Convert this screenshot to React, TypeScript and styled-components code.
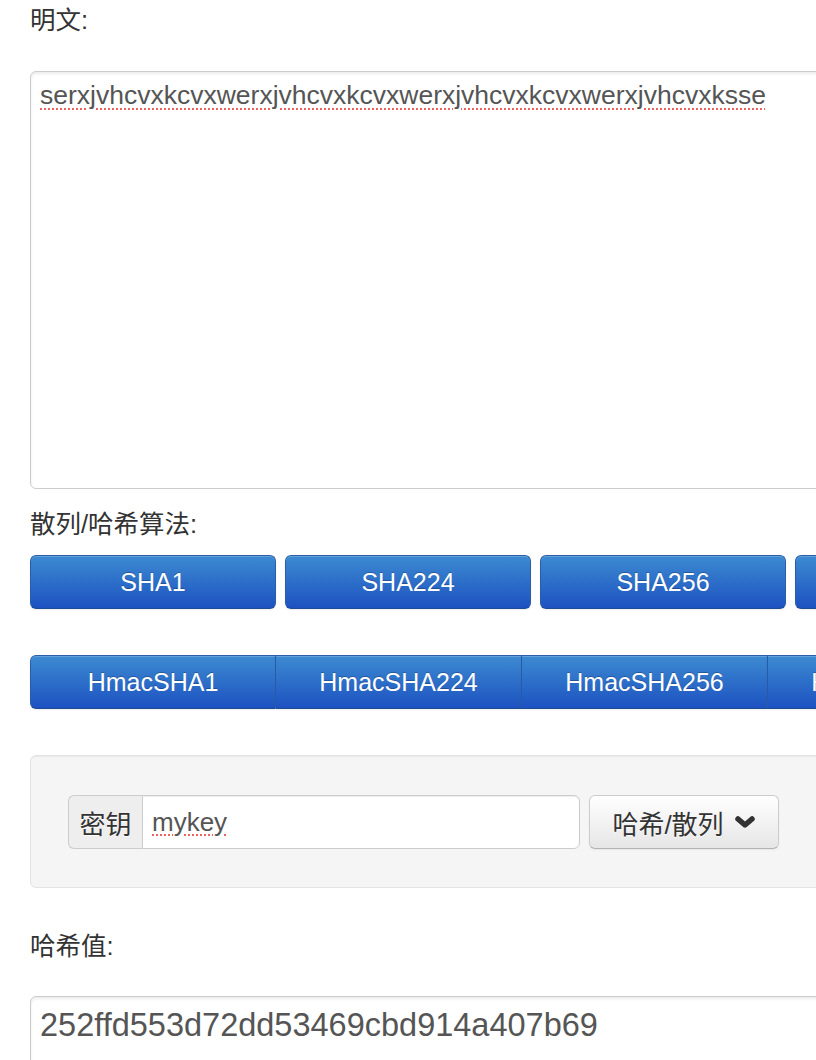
import React from "react";
import styled, { createGlobalStyle } from "styled-components";

const GlobalStyle = createGlobalStyle`
  html, body {
    margin: 0;
    padding: 0;
    background: #ffffff;
    overflow: hidden;
  }
  body {
    font-family: "Liberation Sans", "Noto Sans CJK SC", sans-serif;
    color: #333333;
  }
`;

const Page = styled.div`
  width: 1400px;
  padding: 5px 0 0 30px;
  box-sizing: border-box;
`;

const Label = styled.div<{ $top?: number }>`
  font-size: 25.5px;
  line-height: 30px;
  color: #333333;
  margin-top: ${(p) => p.$top ?? 0}px;
`;

const TextBox = styled.div<{ $top: number; $height: number; $size: number; $line: number; $padTop: number }>`
  box-sizing: border-box;
  width: 1300px;
  height: ${(p) => p.$height}px;
  margin-top: ${(p) => p.$top}px;
  padding: ${(p) => p.$padTop}px 9px 0 9px;
  border: 1px solid #cccccc;
  border-radius: 6px;
  background: #ffffff;
  box-shadow: inset 0 2px 3px rgba(0, 0, 0, 0.08);
  font-size: ${(p) => p.$size}px;
  line-height: ${(p) => p.$line}px;
  color: #555555;
  white-space: nowrap;
`;

const Misspelled = styled.span`
  text-decoration-line: underline;
  text-decoration-style: dotted;
  text-decoration-color: #f0625f;
  text-decoration-thickness: 2px;
  text-underline-offset: 4px;
`;

const ButtonRow = styled.div<{ $top: number; $joined?: boolean }>`
  display: flex;
  gap: ${(p) => (p.$joined ? 0 : 9)}px;
  margin-top: ${(p) => p.$top}px;
`;

const BlueButton = styled.button<{ $joined?: boolean; $first?: boolean }>`
  flex: 0 0 246px;
  width: 246px;
  height: 54px;
  box-sizing: border-box;
  margin: 0;
  padding: 0;
  font-family: "Liberation Sans", "Noto Sans CJK SC", sans-serif;
  font-size: 25px;
  color: #ffffff;
  text-shadow: 0 -1px 0 rgba(0, 0, 0, 0.25);
  background: linear-gradient(to bottom, #3c8ad1, #1d52c1);
  border: 1px solid #2a5ea9;
  border-bottom-color: #1f4a94;
  border-left: ${(p) => (p.$joined && !p.$first ? "none" : "1px solid #2a5ea9")};
  border-radius: ${(p) => (p.$joined ? (p.$first ? "6px 0 0 6px" : "0") : "6px")};
  box-shadow: inset 0 1px 0 rgba(255, 255, 255, 0.2), 0 1px 2px rgba(0, 0, 0, 0.08);
  cursor: pointer;
`;

const Well = styled.div`
  box-sizing: border-box;
  width: 1300px;
  height: 133px;
  margin-top: 46px;
  padding: 39px 0 0 37px;
  background: #f5f5f5;
  border: 1px solid #e3e3e3;
  border-radius: 6px;
  box-shadow: inset 0 1px 1px rgba(0, 0, 0, 0.05);
  display: flex;
  align-items: flex-start;
  gap: 9px;
`;

const InputGroup = styled.div`
  display: flex;
  height: 54px;
`;

const Addon = styled.span`
  box-sizing: border-box;
  width: 74px;
  height: 54px;
  display: flex;
  align-items: center;
  justify-content: center;
  background: #eeeeee;
  border: 1px solid #cccccc;
  border-right: none;
  border-radius: 6px 0 0 6px;
  font-size: 26px;
  color: #333333;
  text-shadow: 0 1px 0 #ffffff;
`;

const KeyInput = styled.div`
  box-sizing: border-box;
  width: 438px;
  height: 54px;
  display: flex;
  align-items: center;
  padding: 0 9px;
  background: #ffffff;
  border: 1px solid #cccccc;
  border-radius: 0 6px 6px 0;
  box-shadow: inset 0 1px 1px rgba(0, 0, 0, 0.075);
  font-size: 26px;
  color: #555555;
`;

const DropButton = styled.button`
  box-sizing: border-box;
  width: 190px;
  height: 54px;
  margin: 0;
  padding: 0;
  display: flex;
  align-items: center;
  justify-content: center;
  gap: 10px;
  font-family: "Liberation Sans", "Noto Sans CJK SC", sans-serif;
  font-size: 26px;
  color: #333333;
  text-shadow: 0 1px 1px rgba(255, 255, 255, 0.75);
  background: linear-gradient(to bottom, #ffffff, #e6e6e6);
  border: 1px solid #cccccc;
  border-bottom-color: #b3b3b3;
  border-radius: 6px;
  box-shadow: inset 0 1px 0 rgba(255, 255, 255, 0.2), 0 1px 2px rgba(0, 0, 0, 0.06);
  cursor: pointer;
`;

const Chevron = () => (
  <svg width="22" height="14" viewBox="0 0 22 14" aria-hidden="true">
    <polyline
      points="4,4 11,10 18,4"
      fill="none"
      stroke="#333333"
      strokeWidth="5.5"
      strokeLinecap="round"
      strokeLinejoin="round"
    />
  </svg>
);

const hashes = ["SHA1", "SHA224", "SHA256", "SHA384", "SHA512"];
const hmacs = ["HmacSHA1", "HmacSHA224", "HmacSHA256", "HmacSHA384", "HmacSHA512"];

export default function App() {
  return (
    <>
      <GlobalStyle />
      <Page>
        <Label>明文:</Label>
        <TextBox $top={36} $height={418} $size={26.5} $line={36} $padTop={5}>
          <Misspelled>serxjvhcvxkcvxwerxjvhcvxkcvxwerxjvhcvxkcvxwerxjvhcvxksse</Misspelled>
        </TextBox>

        <Label $top={20}>散列/哈希算法:</Label>
        <ButtonRow $top={16}>
          {hashes.map((h) => (
            <BlueButton key={h}>{h}</BlueButton>
          ))}
        </ButtonRow>
        <ButtonRow $top={46} $joined>
          {hmacs.map((h, i) => (
            <BlueButton key={h} $joined $first={i === 0}>
              {h}
            </BlueButton>
          ))}
        </ButtonRow>

        <Well>
          <InputGroup>
            <Addon>密钥</Addon>
            <KeyInput>
              <Misspelled>mykey</Misspelled>
            </KeyInput>
          </InputGroup>
          <DropButton>
            <span>哈希/散列</span>
            <Chevron />
          </DropButton>
        </Well>

        <Label $top={43}>哈希值:</Label>
        <TextBox $top={35} $height={130} $size={32.5} $line={40} $padTop={8}>
          252ffd553d72dd53469cbd914a407b69
        </TextBox>
      </Page>
    </>
  );
}
